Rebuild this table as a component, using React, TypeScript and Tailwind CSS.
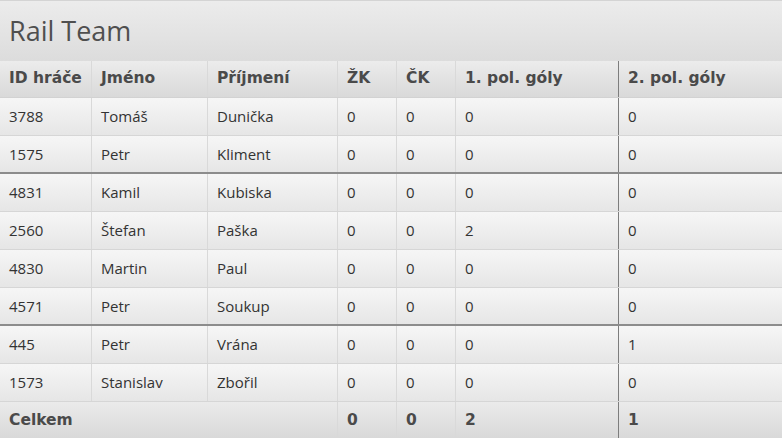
const players = [
  { id: '3788', first: 'Tomáš', last: 'Dunička', zk: 0, ck: 0, g1: 0, g2: 0 },
  { id: '1575', first: 'Petr', last: 'Kliment', zk: 0, ck: 0, g1: 0, g2: 0, sep: true },
  { id: '4831', first: 'Kamil', last: 'Kubiska', zk: 0, ck: 0, g1: 0, g2: 0 },
  { id: '2560', first: 'Štefan', last: 'Paška', zk: 0, ck: 0, g1: 2, g2: 0 },
  { id: '4830', first: 'Martin', last: 'Paul', zk: 0, ck: 0, g1: 0, g2: 0 },
  { id: '4571', first: 'Petr', last: 'Soukup', zk: 0, ck: 0, g1: 0, g2: 0, sep: true },
  { id: '445', first: 'Petr', last: 'Vrána', zk: 0, ck: 0, g1: 0, g2: 1 },
  { id: '1573', first: 'Stanislav', last: 'Zbořil', zk: 0, ck: 0, g1: 0, g2: 0 },
];

const cols = 'grid grid-cols-[92px_116px_130px_59px_59px_163px_1fr]';
const body = "text-[15px] text-[#333] [font-family:'Open_Sans',sans-serif]";
const bold = "text-[15.5px] font-bold text-[#4a4a4a] [font-family:'DejaVu_Sans',sans-serif]";

function Cell({ children, last, dark }: { children?: React.ReactNode; last?: boolean; dark?: boolean }) {
  return (
    <div
      className={
        'flex items-center pl-[9px] ' +
        (last ? '' : dark ? 'border-r border-[#7d7d7d]' : 'border-r border-[#d9d9d9]')
      }
    >
      {children}
    </div>
  );
}

export default function App() {
  return (
    <div className="w-[782px] h-[438px] overflow-hidden bg-[#e6e6e6]">
      <div className="h-[61px] border-t border-[#d4d4d4] bg-linear-to-b from-[#ececec] to-[#dcdcdc] flex items-center pl-[9px]">
        <h1 className="text-[27px] text-[#4f4f4f] [font-family:'Open_Sans',sans-serif] leading-none -mt-[2px]">Rail Team</h1>
      </div>

      <div className={cols + ' h-[37px] border-b border-[#d2d2d2] bg-linear-to-b from-[#ececec] to-[#d9d9d9] ' + bold}>
        <Cell>ID hráče</Cell>
        <Cell>Jméno</Cell>
        <Cell>Příjmení</Cell>
        <Cell>ŽK</Cell>
        <Cell>ČK</Cell>
        <Cell dark>1. pol. góly</Cell>
        <Cell last>2. pol. góly</Cell>
      </div>

      {players.map((p) => (
        <div
          key={p.id}
          className={
            cols +
            ' bg-linear-to-b from-[#f6f6f6] to-[#e6e6e6] ' +
            body +
            (p.sep ? ' h-[38px] border-b-2 border-[#8c8c8c]' : ' h-[38px] border-b border-[#d6d6d6]')
          }
        >
          <Cell>{p.id}</Cell>
          <Cell>{p.first}</Cell>
          <Cell>{p.last}</Cell>
          <Cell>{p.zk}</Cell>
          <Cell>{p.ck}</Cell>
          <Cell dark>{p.g1}</Cell>
          <Cell last>{p.g2}</Cell>
        </div>
      ))}

      <div className={'grid grid-cols-[338px_59px_59px_163px_1fr] h-[38px] bg-linear-to-b from-[#ebebeb] to-[#d8d8d8] ' + bold}>
        <Cell>Celkem</Cell>
        <Cell>0</Cell>
        <Cell>0</Cell>
        <Cell dark>2</Cell>
        <Cell last>1</Cell>
      </div>
    </div>
  );
}
